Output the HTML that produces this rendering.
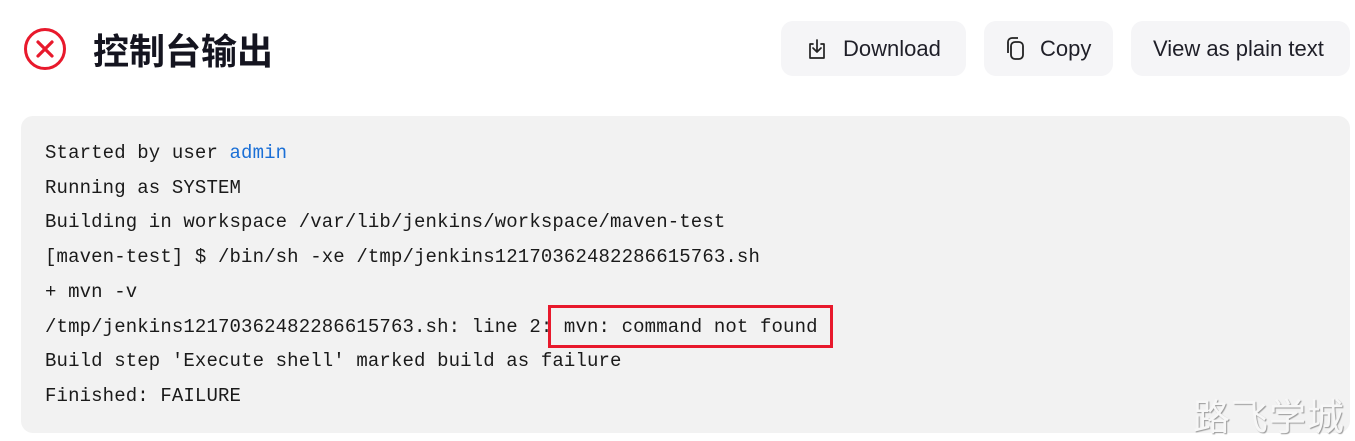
<!DOCTYPE html>
<html><head><meta charset="utf-8"><style>
body{margin:0;width:1355px;height:440px;background:#fff;position:relative;overflow:hidden;font-family:"Liberation Sans","Noto Sans CJK SC",sans-serif;}
.title{position:absolute;left:93px;top:25px;font-size:36px;font-weight:bold;color:#14141f;line-height:48px;font-family:"Noto Sans CJK SC",sans-serif;}
.btn{position:absolute;top:21px;height:55px;background:#f5f5f7;border-radius:12px;font-size:22px;color:#1f1f28;display:flex;align-items:center;box-sizing:border-box;}
.panel{position:absolute;left:21px;top:116px;width:1329px;height:317px;background:#f2f2f2;border-radius:12px;}
.log{position:absolute;left:45px;top:136px;font-family:"Liberation Mono",monospace;font-size:19px;letter-spacing:0.13px;line-height:34.7px;color:#1a1a1a;white-space:pre;}
.log a{color:#1a6fd6;text-decoration:none}
.box{position:absolute;left:548px;top:305px;width:285px;height:43px;border:3px solid #e8192c;box-sizing:border-box;}
.wm{position:absolute;left:1193px;top:392px;font-size:37px;color:#f7f7f7;font-family:"Noto Sans CJK SC",sans-serif;text-shadow:1px 1px 1px #999;line-height:44px;letter-spacing:1px;}
</style></head><body>
<svg style="position:absolute;left:23px;top:27px" width="44" height="44" viewBox="0 0 44 44"><circle cx="22" cy="22" r="19.5" fill="none" stroke="#e8192c" stroke-width="3"/><path d="M15 15L29 29M29 15L15 29" stroke="#e8192c" stroke-width="3.2" stroke-linecap="round"/></svg>
<div class="title">控制台输出</div>
<div class="btn" style="left:781px;width:185px;padding-left:24px">
<svg width="24" height="24" viewBox="0 0 24 24" fill="none" stroke="#222" stroke-width="1.7" stroke-linecap="round" stroke-linejoin="round"><path d="M8 7H5v14h14V7h-3"/><path d="M12 3v12M8 11l4 4 4-4"/></svg>
<span style="margin-left:14px">Download</span></div>
<div class="btn" style="left:984px;width:129px;padding-left:20px">
<svg width="24" height="26" viewBox="0 0 24 26" fill="none" stroke="#222" stroke-width="1.8"><rect x="7" y="6" width="12" height="17" rx="4"/><path d="M4 17V6a4 4 0 0 1 4-4h6"/></svg>
<span style="margin-left:12px">Copy</span></div>
<div class="btn" style="left:1131px;width:219px;padding-left:22px">View as plain text</div>
<div class="panel"></div>
<div class="log">Started by user <a>admin</a>
Running as SYSTEM
Building in workspace /var/lib/jenkins/workspace/maven-test
[maven-test] $ /bin/sh -xe /tmp/jenkins12170362482286615763.sh
+ mvn -v
/tmp/jenkins12170362482286615763.sh: line 2: mvn: command not found
Build step 'Execute shell' marked build as failure
Finished: FAILURE</div>
<div class="box"></div>
<div class="wm">路飞学城</div>
</body></html>
